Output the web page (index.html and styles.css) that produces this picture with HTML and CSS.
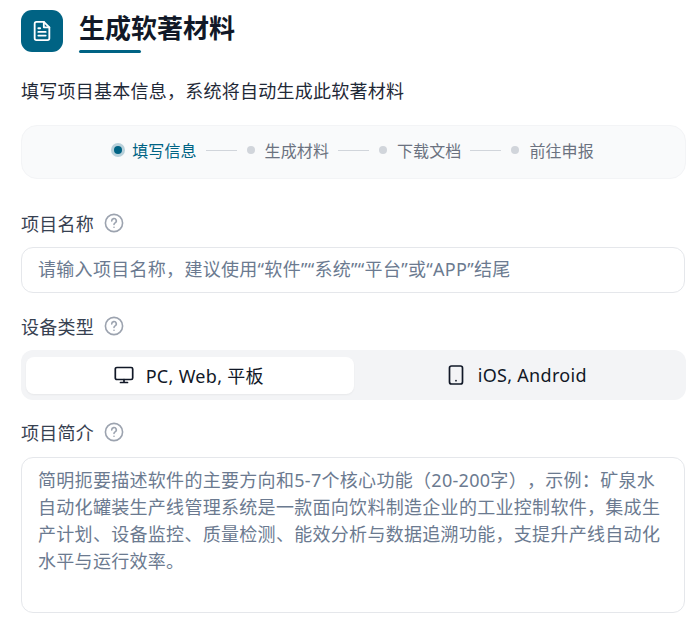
FILE: index.html
```html
<!DOCTYPE html>
<html lang="zh-CN">
<head>
    <meta charset="UTF-8">
    <title>生成软著材料</title>
    <link rel="stylesheet" href="styles.css">
</head>
<body>
    <div class="container">
        <!-- Header -->
        <div class="header">
            <div class="header-icon">
                <svg width="22" height="22" viewBox="0 0 24 24" fill="none" stroke="#fff" stroke-width="2" stroke-linecap="round" stroke-linejoin="round">
                    <path d="M14 2H6a2 2 0 0 0-2 2v16a2 2 0 0 0 2 2h12a2 2 0 0 0 2-2V8z"/>
                    <path d="M14 2v6h6"/>
                    <path d="M8 9h2M8 13h8M8 17h8"/>
                </svg>
            </div>
            <h1 class="title">生成软著材料</h1>
        </div>
        <p class="subtitle">填写项目基本信息，系统将自动生成此软著材料</p>

        <!-- Steps -->
        <div class="steps">
            <span class="dot dot-active"></span><span class="step-text step-active">填写信息</span><span class="step-line"></span>
            <span class="dot"></span><span class="step-text">生成材料</span><span class="step-line"></span>
            <span class="dot"></span><span class="step-text">下载文档</span><span class="step-line"></span>
            <span class="dot"></span><span class="step-text">前往申报</span>
        </div>

        <!-- Form -->
        <div class="label-row label-first">
            <label class="label">项目名称</label>
            <svg class="help" width="20" height="20" viewBox="0 0 20 20" fill="none" stroke="#9ca3af" stroke-width="1.6" stroke-linecap="round">
                <circle cx="10" cy="10" r="8.6"/>
                <path d="M7.7 7.9a2.3 2.3 0 1 1 3.4 2c-.7.4-1.1.9-1.1 1.6"/>
                <path d="M10 14.2v.1"/>
            </svg>
        </div>
        <div class="input">请输入项目名称，建议使用“软件”“系统”“平台”或“APP”结尾</div>

        <div class="label-row">
            <label class="label">设备类型</label>
            <svg class="help" width="20" height="20" viewBox="0 0 20 20" fill="none" stroke="#9ca3af" stroke-width="1.6" stroke-linecap="round">
                <circle cx="10" cy="10" r="8.6"/>
                <path d="M7.7 7.9a2.3 2.3 0 1 1 3.4 2c-.7.4-1.1.9-1.1 1.6"/>
                <path d="M10 14.2v.1"/>
            </svg>
        </div>
        <div class="device-switch">
            <div class="device device-active">
                <svg width="20" height="20" viewBox="0 0 20 20" fill="none" stroke="#111827" stroke-width="1.7" stroke-linecap="round" stroke-linejoin="round">
                    <rect x="1.3" y="2.5" width="17.4" height="12" rx="1.6"/>
                    <path d="M10 14.5v3M6.5 17.5h7"/>
                </svg>
                <span>PC, Web, 平板</span>
            </div>
            <div class="device">
                <svg width="20" height="20" viewBox="0 0 20 20" fill="none" stroke="#111827" stroke-width="1.7" stroke-linecap="round" stroke-linejoin="round">
                    <rect x="3.5" y="1" width="13" height="18" rx="2"/>
                    <path d="M10 15.6v.1"/>
                </svg>
                <span>iOS, Android</span>
            </div>
        </div>

        <div class="label-row">
            <label class="label">项目简介</label>
            <svg class="help" width="20" height="20" viewBox="0 0 20 20" fill="none" stroke="#9ca3af" stroke-width="1.6" stroke-linecap="round">
                <circle cx="10" cy="10" r="8.6"/>
                <path d="M7.7 7.9a2.3 2.3 0 1 1 3.4 2c-.7.4-1.1.9-1.1 1.6"/>
                <path d="M10 14.2v.1"/>
            </svg>
        </div>
        <div class="textarea">简明扼要描述软件的主要方向和5-7个核心功能（20-200字），示例：矿泉水自动化罐装生产线管理系统是一款面向饮料制造企业的工业控制软件，集成生产计划、设备监控、质量检测、能效分析与数据追溯功能，支提升产线自动化水平与运行效率。</div>
    </div>
</body>
</html>
```

FILE: styles.css
```css
* {
    box-sizing: border-box;
}
body {
    margin: 0;
    background: #fff;
    font-family: "Noto Sans", "Noto Sans CJK SC", sans-serif;
    color: #111827;
    overflow: hidden;
    text-spacing-trim: space-all;
}
.container {
    width: 665px;
    margin-left: 21px;
    padding-top: 10px;
}
.header {
    display: flex;
    align-items: flex-start;
    gap: 16px;
}
.header-icon {
    width: 42px;
    height: 42px;
    border-radius: 11px;
    background: #006384;
    display: flex;
    align-items: center;
    justify-content: center;
}
.title {
    margin: 0;
    font-size: 26px;
    line-height: 36px;
    font-weight: 700;
    color: #111827;
    padding-bottom: 4px;
    position: relative;
}
.title::after {
    content: "";
    position: absolute;
    left: 0;
    top: 40px;
    width: 62px;
    height: 3px;
    border-radius: 2px;
    background: #006384;
}
.subtitle {
    margin: 25px 0 0;
    font-size: 18px;
    line-height: 28px;
    color: #1f2937;
    letter-spacing: 0.25px;
}
.steps {
    margin-top: 20px;
    height: 54px;
    background: #f9fafb;
    border: 1px solid #f3f4f6;
    border-radius: 16px;
    display: flex;
    align-items: center;
    justify-content: center;
    padding: 0 2px 4px 0;
}
.dot {
    width: 8px;
    height: 8px;
    border-radius: 50%;
    background: #d1d5db;
    margin-right: 10px;
}
.dot-active {
    background: #006384;
    box-shadow: 0 0 0 3px #b8d0da;
    margin: 0 10px 0 3px;
}
.step-text {
    font-size: 16px;
    letter-spacing: 0.1px;
    color: #6b7280;
}
.step-active {
    color: #006384;
}
.step-line {
    width: 31px;
    height: 1px;
    background: #d1d5db;
    margin: 0 10px 0 9px;
}
.label-row {
    display: flex;
    align-items: center;
    gap: 10px;
    height: 28px;
    margin-top: 19px;
}
.label-first {
    margin-top: 30px;
}
.device-switch + .label-row {
    margin-top: 18px;
}
.label {
    font-size: 18px;
    letter-spacing: 0.25px;
    color: #374151;
}
.help {
    flex: none;
}
.input {
    width: 664px;
    margin-top: 10px;
    height: 46px;
    border: 1px solid #e5e7eb;
    border-radius: 12px;
    padding: 0 16px;
    font-size: 18px;
    line-height: 43px;
    letter-spacing: 0.3px;
    color: #6b7a90;
    white-space: nowrap;
}
.device-switch {
    margin-top: 10px;
    height: 50px;
    background: #f3f4f6;
    border-radius: 12px;
    padding: 7px 5px 6px;
    display: flex;
}
.device {
    flex: 1;
    display: flex;
    align-items: center;
    justify-content: center;
    gap: 12px;
    padding: 0 2px 2px 0;
    font-size: 18px;
    letter-spacing: 0.3px;
    color: #111827;
    border-radius: 8px;
}
.device-active {
    background: #fff;
    box-shadow: 0 1px 2px rgba(0, 0, 0, 0.05);
}
.textarea {
    width: 664px;
    margin-top: 11px;
    height: 156px;
    border: 1px solid #e5e7eb;
    border-radius: 12px;
    padding: 9px 16px;
    font-size: 18px;
    line-height: 27px;
    letter-spacing: 0.3px;
    color: #6b7a90;
}
```
